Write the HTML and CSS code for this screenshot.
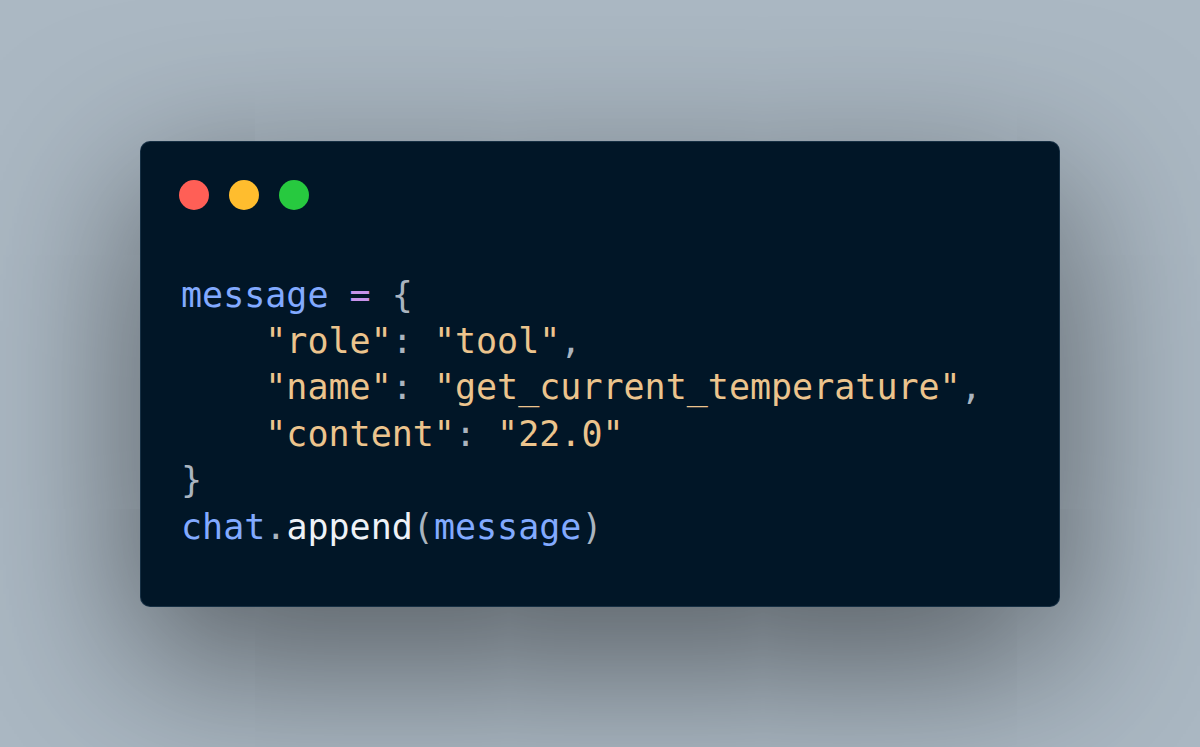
FILE: index.html
```html
<!DOCTYPE html>
<html lang="en">
<head>
<meta charset="utf-8">
<title>Code snippet</title>
<link rel="stylesheet" href="styles.css">
</head>
<body>
<main class="stage">
  <section class="window">
    <div class="controls">
      <span class="dot dot-red"></span>
      <span class="dot dot-yellow"></span>
      <span class="dot dot-green"></span>
    </div>
    <pre class="code"><code><span class="var">message</span> <span class="op">=</span> <span class="punc">{</span>
    <span class="str">"role"</span><span class="punc">:</span> <span class="str">"tool"</span><span class="punc">,</span>
    <span class="str">"name"</span><span class="punc">:</span> <span class="str">"get_current_temperature"</span><span class="punc">,</span>
    <span class="str">"content"</span><span class="punc">:</span> <span class="str">"22.0"</span>
<span class="punc">}</span>
<span class="var">chat</span><span class="punc">.</span><span class="fn">append</span><span class="punc">(</span><span class="var">message</span><span class="punc">)</span></code></pre>
  </section>
</main>
</body>
</html>
```

FILE: styles.css
```css
* {
  box-sizing: border-box;
}

html, body {
  margin: 0;
  padding: 0;
}

body {
  background: #abb8c3;
  width: 1200px;
  height: 747px;
  overflow: hidden;
}

.stage {
  height: 747px;
  display: flex;
  align-items: center;
  justify-content: center;
}

.window {
  width: 920px;
  height: 466px;
  background: #011627;
  border-radius: 10px;
  border: 1px solid rgba(120, 160, 200, 0.18);
  box-shadow: 0 49px 167px rgba(0, 0, 0, 0.55);
  padding: 38px 0 0 38px;
}

.controls {
  display: flex;
  gap: 20px;
  height: 30px;
}

.dot {
  width: 30px;
  height: 30px;
  border-radius: 50%;
  display: block;
}

.dot-red { background: #ff5f56; }
.dot-yellow { background: #ffbd2e; }
.dot-green { background: #27c93f; }

.code {
  margin: 62px 0 0 2px;
  font-family: "DejaVu Sans Mono", "Liberation Mono", monospace;
  font-size: 35px;
  line-height: 46.4px;
  color: #d6deeb;
  white-space: pre;
}

.var { color: #82aaff; }
.str { color: #ecc48d; }
.op { color: #c792ea; }
.punc { color: #aab4bf; }
.fn { color: #eef2f7; }
```
